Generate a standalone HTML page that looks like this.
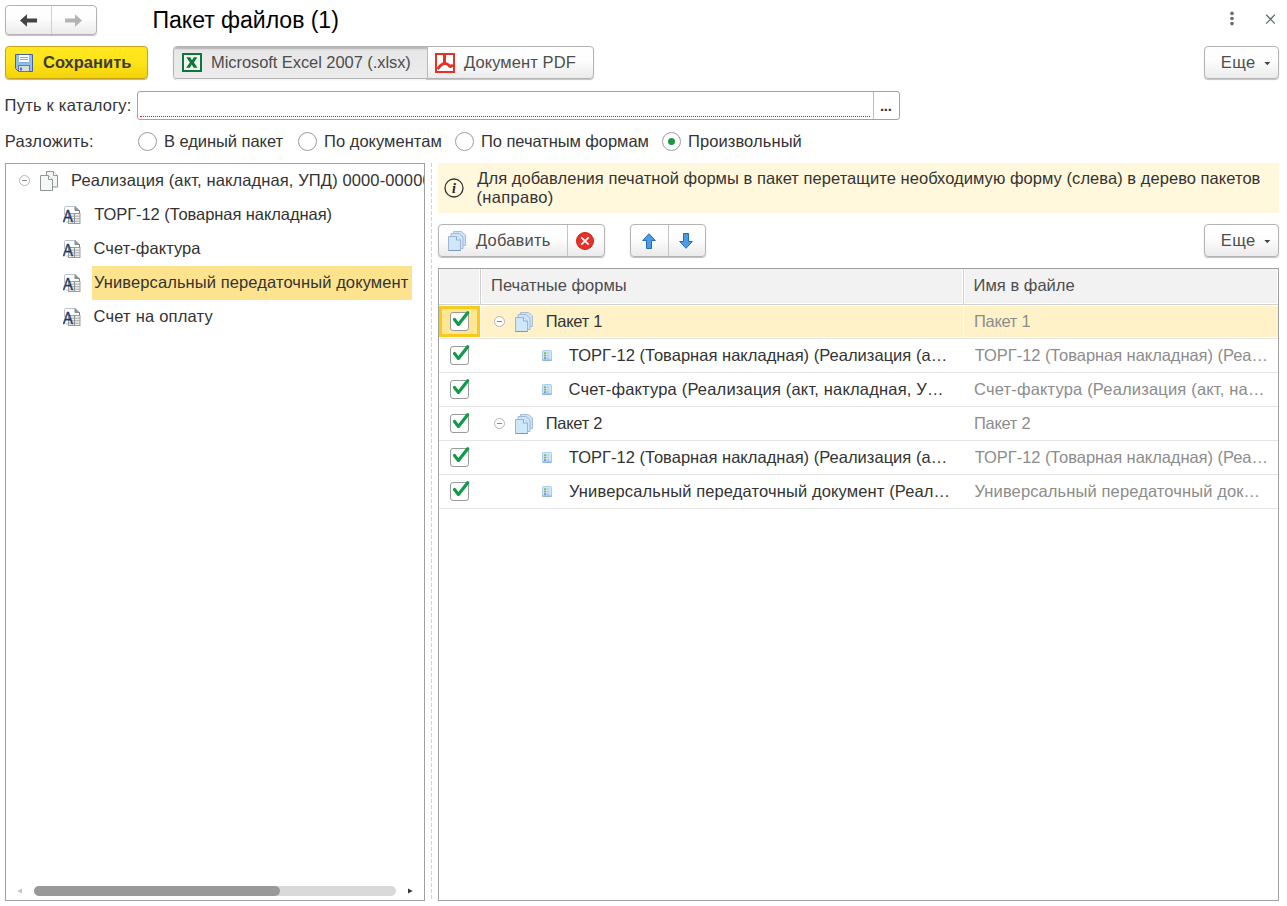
<!DOCTYPE html>
<html lang="ru">
<head>
<meta charset="utf-8">
<title>Пакет файлов (1)</title>
<style>
*{box-sizing:border-box;margin:0;padding:0}
html,body{width:1287px;height:906px;overflow:hidden;background:#fff}
body{font-family:"Liberation Sans",sans-serif;font-size:16.5px;color:#333;position:relative}
.abs{position:absolute}
.btn{position:absolute;border:1px solid #b3b3b3;border-radius:4px;background:linear-gradient(#fff 0%,#fdfdfd 45%,#ebebeb 100%);box-shadow:0 1px 1px rgba(0,0,0,.25);color:#4d4d4d;white-space:nowrap}
.txt{position:absolute;white-space:nowrap;line-height:20px}
.title{position:absolute;left:152.500px;top:6px;letter-spacing:-.05px;font-size:23.100px;line-height:28px;color:#000;white-space:nowrap}
.save{position:absolute;left:5px;top:46px;width:143px;height:33px;border:1px solid #c9a21c;border-radius:4px;background:linear-gradient(#ffe81e 0%,#fde31a 50%,#f3d30a 100%);box-shadow:0 1px 1px rgba(0,0,0,.3);color:#3b3b3b;font-weight:bold}
.radio{position:absolute;width:19px;height:19px;border:1px solid #9c9c9c;border-radius:50%;background:#fff}
.radio.on::after{content:"";position:absolute;left:5px;top:5px;width:7px;height:7px;border-radius:50%;background:#1e9447}
.panel{position:absolute;border:1px solid #a0a0a0;background:#fff}
.row{position:absolute;left:0;width:839px;height:34px}
.row .ln{position:absolute;left:0;top:33px;width:839px;height:1px;background:#e4e4e4}
.cb{position:absolute;left:11px;top:7px;width:19px;height:19px;border:1px solid #9a9a9a;border-radius:3px;background:#fff}
.cb svg{position:absolute;left:-1px;top:-4px}
.c2{position:absolute;left:535px;top:6px;line-height:20px;color:#8c8c8c;white-space:nowrap;overflow:hidden;text-overflow:ellipsis}
.c1{position:absolute;top:6px;line-height:20px;color:#333;white-space:nowrap;overflow:hidden;text-overflow:ellipsis}
</style>
</head>
<body>
<svg width="0" height="0" style="position:absolute">
<defs>
<symbol id="i-min" viewBox="0 0 11 11"><circle cx="5.500" cy="5.500" r="5" fill="#fff" stroke="#b5b5b5" stroke-width="1"/><rect x="3" y="5" width="5" height="1" fill="#8a8a8a"/></symbol>
<symbol id="i-docs" viewBox="0 0 18 20"><path d="M6.500 .5h7l4 4v11.500h-11z" fill="#f4f4f4" stroke="#8e9696" stroke-width="1"/><path d="M13.500 .5v4h4" fill="#fff" stroke="#8e9696" stroke-width="1"/><path d="M.5 4.500h8l4 4v11h-12z" fill="#f6f6f6" stroke="#8e9696" stroke-width="1"/><path d="M8.500 4.500v4h4" fill="#fff" stroke="#8e9696" stroke-width="1"/></symbol>
<symbol id="i-a" viewBox="0 0 19 19"><path d="M1.500 10V2.500Q1.500 1.500 2.500 1.500H12.500L16.500 5.500V17H3" fill="#fff" stroke="#b9c3d0" stroke-width="1"/><path d="M12 1.500V5.500H16.500V9" fill="none" stroke="#75837f" stroke-width="1"/><path d="M12 1.500L16.500 5.500H12Z" fill="#8a9895"/><rect x="5.500" y="8.500" width="11.500" height="10" fill="#efefef" stroke="#9c9c9c" stroke-width="1"/><path d="M5.500 11.200H17M5.500 13.700H17M5.500 16.200H17" stroke="#a6a6a6" stroke-width=".9" fill="none"/><path d="M11.500 8.500V18.500" stroke="#8f8f8f" stroke-width="1" fill="none"/><text x="-.2" y="17" font-family="Liberation Sans, sans-serif" font-size="16.700" fill="#1f3864" stroke="#1f3864" stroke-width=".3" textLength="10.200" lengthAdjust="spacingAndGlyphs">A</text></symbol>
<symbol id="i-pack" viewBox="0 0 18 20"><path d="M5.500 .5h8l4 3.500v10.500h-12z" fill="#cbe5f7" stroke="#a9bcd6" stroke-width="1"/><path d="M3 2.500h8l4 3.500v11.500h-12z" fill="#cde6f8" stroke="#a3b8d6" stroke-width="1"/><path d="M.5 5.500h8l4 3.500v10.500h-12z" fill="#cfe8f9" stroke="#a0b4d2" stroke-width="1"/><path d="M8.500 5.500v3.500h4" fill="#e4f2fc" stroke="#8eaad2" stroke-width="1"/><path d="M.5 19.500h12" stroke="#7f96c4" stroke-width="1"/></symbol>
<symbol id="i-sheet" viewBox="0 0 10 11"><rect x=".5" y=".5" width="9" height="10" rx=".8" fill="#d0e8f8" stroke="#a9cdee" stroke-width="1"/><rect x=".3" y="9.500" width="9.400" height="1.200" fill="#88a8d6"/><rect x="2" y="2.200" width="2.200" height="2" fill="#6ec468"/><rect x="2" y="4.900" width="2.200" height="1.500" fill="#e0863e"/><rect x="2" y="7.200" width="2.200" height="1.800" fill="#58a2e4"/><rect x="5.200" y="2.200" width="2" height="2" fill="#b6d4f0"/><rect x="5.200" y="5.200" width="2" height="1" fill="#a9c6e6"/><rect x="5.200" y="7.200" width="2" height="1.800" fill="#a9c6e6"/></symbol>
<symbol id="i-chk" viewBox="0 0 22 24"><path d="M4.500 10.500 L8.400 15.400 L17.700 3.700" fill="none" stroke="#0f9b4a" stroke-width="3.200" stroke-linejoin="round" stroke-linecap="round"/></symbol>
</defs>
</svg>
<!-- nav buttons -->
<div class="btn" style="left:5px;top:5px;width:92px;height:30px"></div>
<div class="abs" style="left:51px;top:6px;width:1px;height:28px;background:#d0d0d0"></div>
<svg class="abs" style="left:19px;top:13px" width="20" height="15" viewBox="0 0 20 15"><path d="M1 7.500 L8 1.300 L8 5.500 L18 5.500 L18 9.500 L8 9.500 L8 13.700 Z" fill="#444"/></svg>
<svg class="abs" style="left:63px;top:13px" width="20" height="15" viewBox="0 0 20 15"><path d="M19 7.500 L12 1.300 L12 5.500 L2 5.500 L2 9.500 L12 9.500 L12 13.700 Z" fill="#b3b3b3"/></svg>
<svg class="abs" style="left:1229px;top:11px" width="6" height="15" viewBox="0 0 6 15"><circle cx="3" cy="2.400" r="1.800" fill="#666d6b"/><circle cx="3" cy="7.500" r="1.800" fill="#666d6b"/><circle cx="3" cy="12.600" r="1.800" fill="#666d6b"/></svg>
<svg class="abs" style="left:1265px;top:14px" width="11" height="11" viewBox="0 0 11 11"><path d="M1.200 .8L9.800 9.600M9.800 .8L1.200 9.600" stroke="#5f6e6b" stroke-width="1.300" fill="none"/></svg>
<div class="title">Пакет файлов (1)</div>
<!-- save -->
<div class="save"><svg class="abs" style="left:9px;top:7px" width="18" height="18" viewBox="0 0 18 18"><path d="M.5 .5H17.500V17.500H3.500L.5 14.500Z" fill="#8ec1e9" stroke="#3f63a3" stroke-width="1"/><rect x="4" y="1" width="10" height="7" fill="#fff"/><rect x="4" y="8" width="10" height=".6" fill="#7a96c4"/><rect x="5" y="3" width="8" height="1" fill="#7fb0dc"/><rect x="5" y="5" width="8" height="1" fill="#7fb0dc"/><rect x="3.500" y="11.500" width="11" height="6" fill="#dcdcdc" stroke="#6d6fae" stroke-width="1"/><rect x="5" y="13.500" width="2" height="3" fill="#2e7fd6"/></svg><span class="txt" style="left:37px;top:5px">Сохранить</span></div>
<!-- format toggle -->
<div class="btn" style="left:173px;top:46px;width:421px;height:33px"></div>
<div class="abs" style="left:174px;top:47px;width:254px;height:31px;background:linear-gradient(#b6b6b6 0,#bdbdbd 1.500px,#dcdcdc 2.500px,#e7e7e7 4px,#ececec 100%);border-radius:3px 0 0 3px;border-right:1px solid #b9b9b9"></div>
<div class="abs" style="left:176px;top:79px;width:250px;height:1px;background:#f6f6f6"></div>
<svg class="abs" style="left:182px;top:53px" width="20" height="19" viewBox="0 0 20 19"><rect x="1" y="1" width="18" height="17" fill="#f3f1f1" stroke="#0a7837" stroke-width="2"/><path d="M4.300 4.300H8.200L10 7.300L11.800 4.300H15.300L11.900 9.400L15.500 14.800H11.700L9.800 11.600L7.900 14.800H4.100L7.900 9.400Z" fill="#0a7837"/></svg>
<svg class="abs" style="left:435px;top:53px" width="20" height="20" viewBox="0 0 20 20"><rect x="1" y="1" width="18" height="18" fill="#fff" stroke="#e3342a" stroke-width="2"/><path d="M9.500 2V9.500" stroke="#e3342a" stroke-width="3" fill="none"/><path d="M2.500 16L5.500 12.500L9.500 10L13 11.500L15 13.500L18 12.500" stroke="#e3342a" stroke-width="2.900" fill="none" stroke-linejoin="round"/></svg>
<span class="txt" style="left:211px;top:52px;color:#4d4d4d;letter-spacing:-.07px">Microsoft Excel 2007 (.xlsx)</span>
<span class="txt" style="left:464px;top:52px;color:#4d4d4d;letter-spacing:.091px">Документ PDF</span>
<div class="btn" style="left:1204px;top:46px;width:75px;height:33px"><span class="txt" style="left:15.800px;top:5px;letter-spacing:.35px">Еще</span><svg class="abs" style="left:59px;top:15px" width="7" height="4"><path d="M.3 0h6L3.300 3.200z" fill="#444"/></svg></div>
<!-- path -->
<span class="txt" style="left:4.600px;top:95px;letter-spacing:.227px">Путь к каталогу:</span>
<div class="abs" style="left:137px;top:91px;width:763px;height:29px;border:1px solid #a2a2a2;border-radius:3px;background:#fff"></div>
<div class="abs" style="left:873px;top:92px;width:1px;height:27px;background:#bdbdbd"></div>
<div class="abs" style="left:140px;top:116px;width:730px;height:0;border-top:1px dotted #f01010"></div>
<span class="txt" style="left:880px;top:96px;color:#333;font-weight:bold;font-size:15px;letter-spacing:-.3px">...</span>
<!-- radios -->
<span class="txt" style="left:4.800px;top:131px;letter-spacing:.244px">Разложить:</span>
<div class="radio" style="left:138px;top:132px"></div><span class="txt" style="left:164px;top:131px;letter-spacing:-.054px">В единый пакет</span>
<div class="radio" style="left:298px;top:132px"></div><span class="txt" style="left:324px;top:131px;letter-spacing:.033px">По документам</span>
<div class="radio" style="left:455px;top:132px"></div><span class="txt" style="left:481px;top:131px;letter-spacing:-.059px">По печатным формам</span>
<div class="radio on" style="left:662px;top:132px"></div><span class="txt" style="left:688px;top:131px;letter-spacing:.091px">Произвольный</span>
<!-- left tree -->
<div class="panel" style="left:5px;top:163px;width:420px;height:738px;overflow:hidden">
<svg class="abs" style="left:13px;top:11px" width="11" height="11"><use href="#i-min"/></svg>
<svg class="abs" style="left:34px;top:7px" width="18" height="20"><use href="#i-docs"/></svg>
<span class="txt" style="left:65px;top:6px;letter-spacing:.12px">Реализация (акт, накладная, УПД) 0000-000001 от 01.01.2020</span>
<svg class="abs" style="left:57px;top:41px" width="19" height="19"><use href="#i-a"/></svg>
<span class="txt" style="left:88.200px;top:40px;letter-spacing:-.063px">ТОРГ-12 (Товарная накладная)</span>
<svg class="abs" style="left:57px;top:75px" width="19" height="19"><use href="#i-a"/></svg>
<span class="txt" style="left:87.500px;top:74px;letter-spacing:.064px">Счет-фактура</span>
<div class="abs" style="left:86px;top:102px;width:320px;height:34px;background:#fde38e"></div>
<svg class="abs" style="left:57px;top:109px" width="19" height="19"><use href="#i-a"/></svg>
<span class="txt" style="left:88px;top:108px;letter-spacing:.097px">Универсальный передаточный документ</span>
<svg class="abs" style="left:57px;top:143px" width="19" height="19"><use href="#i-a"/></svg>
<span class="txt" style="left:87.500px;top:142px;letter-spacing:.215px">Счет на оплату</span>
<div class="abs" style="left:28px;top:722px;width:362px;height:10px;border-radius:5px;background:#d9d9d9"></div>
<div class="abs" style="left:28px;top:722px;width:246px;height:10px;border-radius:5px;background:#999"></div>
<svg class="abs" style="left:11px;top:724px" width="5" height="6" viewBox="0 0 5 6"><path d="M5 .5L.3 3L5 5.500z" fill="#c2c2c2"/></svg>
<svg class="abs" style="left:402px;top:724px" width="5" height="6" viewBox="0 0 5 6"><path d="M0 .5L4.700 3L0 5.500z" fill="#3a3a3a"/></svg>
</div>
<!-- right -->
<div class="abs" style="left:438px;top:163px;width:841px;height:50px;background:#fff8dc"></div>
<svg class="abs" style="left:444px;top:178px" width="20" height="20" viewBox="0 0 20 20"><circle cx="10" cy="10" r="9" fill="none" stroke="#333" stroke-width="1.300"/><text x="10" y="15" text-anchor="middle" font-family="Liberation Serif, serif" font-style="italic" font-weight="bold" font-size="14" fill="#222">i</text></svg>
<div class="txt" style="left:477.300px;top:169px;line-height:19px;color:#333;letter-spacing:.05px">Для добавления печатной формы в пакет перетащите необходимую форму (слева) в дерево пакетов</div>
<div class="txt" style="left:476.500px;top:188px;line-height:19px;color:#333;letter-spacing:.312px">(направо)</div>
<div class="abs" style="left:431px;top:163px;width:1px;height:738px;background:repeating-linear-gradient(to bottom,#d2d2d2 0,#d2d2d2 4px,transparent 4px,transparent 6px)"></div>
<div class="btn" style="left:438px;top:224px;width:167px;height:33px"><svg class="abs" style="left:9px;top:6px" width="18" height="20"><use href="#i-pack"/></svg><span class="txt" style="left:37px;top:5px;letter-spacing:.2px">Добавить</span></div>
<div class="abs" style="left:567px;top:225px;width:1px;height:31px;background:#c4c4c4"></div>
<svg class="abs" style="left:576px;top:232px" width="18" height="18" viewBox="0 0 18 18"><circle cx="9" cy="9" r="8.500" fill="#e8302a" stroke="#c72620" stroke-width="1"/><path d="M5.300 5.300L12.700 12.700M12.700 5.300L5.300 12.700" stroke="#fff" stroke-width="1.700" fill="none"/></svg>
<div class="btn" style="left:630px;top:224px;width:76px;height:33px"></div>
<div class="abs" style="left:668px;top:225px;width:1px;height:31px;background:#c4c4c4"></div>
<svg class="abs" style="left:642px;top:233px" width="14" height="16" viewBox="0 0 14 16"><path d="M7 .7L13.300 7.500H9.500V15.500H4.500V7.500H.7Z" fill="#4c9be6" stroke="#2a68b4" stroke-width="1"/></svg>
<svg class="abs" style="left:679px;top:233px" width="14" height="16" viewBox="0 0 14 16"><path d="M7 15.300L13.300 8.500H9.500V.5H4.500V8.500H.7Z" fill="#4c9be6" stroke="#2a68b4" stroke-width="1"/></svg>
<div class="btn" style="left:1204px;top:224px;width:75px;height:33px"><span class="txt" style="left:15.800px;top:5px;letter-spacing:.35px">Еще</span><svg class="abs" style="left:59px;top:15px" width="7" height="4"><path d="M.3 0h6L3.300 3.200z" fill="#444"/></svg></div>
<div class="panel" style="left:438px;top:268px;width:841px;height:633px;overflow:hidden">
<div class="abs" style="left:1px;top:0;width:39px;height:34px;background:#f2f2f2"></div>
<div class="abs" style="left:43px;top:0;width:480px;height:34px;background:#f2f2f2"></div>
<div class="abs" style="left:526px;top:0;width:312px;height:34px;background:#f2f2f2"></div>
<div class="abs" style="left:0;top:35px;width:839px;height:1px;background:#d2d2d2"></div>
<div class="abs" style="left:41px;top:0;width:1px;height:36px;background:#cfcfcf"></div>
<div class="abs" style="left:524px;top:0;width:1px;height:36px;background:#cfcfcf"></div>
<span class="txt" style="left:52px;top:6px;color:#4d4d4d;letter-spacing:.031px">Печатные формы</span>
<span class="txt" style="left:534.600px;top:6px;color:#4d4d4d;letter-spacing:.02px">Имя в файле</span>
<div class="row" style="top:36px"><div class="abs" style="left:0;top:1px;width:839px;height:31px;background:#fff2c8"></div><div class="abs" style="left:0;top:1px;width:41px;height:31px;background:#fde792;border:3px solid #f7ca1c"></div><div class="abs" style="left:41px;top:1px;width:1px;height:31px;background:#fffaf0"></div><div class="abs" style="left:524px;top:1px;width:1px;height:31px;background:#fffaf0"></div><div class="cb"><svg width="22" height="24"><use href="#i-chk"/></svg></div><svg class="abs" style="left:55px;top:11px" width="11" height="11"><use href="#i-min"/></svg><svg class="abs" style="left:76px;top:7px" width="18" height="20"><use href="#i-pack"/></svg><span class="c1" style="left:106.8px;letter-spacing:-0.3px">Пакет 1</span><span class="c2" style="left:535px;letter-spacing:-0.3px">Пакет 1</span><div class="ln"></div></div>
<div class="row" style="top:70px"><div class="cb"><svg width="22" height="24"><use href="#i-chk"/></svg></div><svg class="abs" style="left:103px;top:11px" width="10" height="11"><use href="#i-sheet"/></svg><span class="c1" style="left:129.8px;letter-spacing:0.026px">ТОРГ-12 (Товарная накладная) (Реализация (а…</span><span class="c2" style="left:535.8px;letter-spacing:-0.052px">ТОРГ-12 (Товарная накладная) (Реа…</span><div class="ln"></div></div>
<div class="row" style="top:104px"><div class="cb"><svg width="22" height="24"><use href="#i-chk"/></svg></div><svg class="abs" style="left:103px;top:11px" width="10" height="11"><use href="#i-sheet"/></svg><span class="c1" style="left:129.5px;letter-spacing:0.179px">Счет-фактура (Реализация (акт, накладная, У…</span><span class="c2" style="left:535px;letter-spacing:0.176px">Счет-фактура (Реализация (акт, на…</span><div class="ln"></div></div>
<div class="row" style="top:138px"><div class="cb"><svg width="22" height="24"><use href="#i-chk"/></svg></div><svg class="abs" style="left:55px;top:11px" width="11" height="11"><use href="#i-min"/></svg><svg class="abs" style="left:76px;top:7px" width="18" height="20"><use href="#i-pack"/></svg><span class="c1" style="left:106.8px;letter-spacing:-0.3px">Пакет 2</span><span class="c2" style="left:535px;letter-spacing:-0.3px">Пакет 2</span><div class="ln"></div></div>
<div class="row" style="top:172px"><div class="cb"><svg width="22" height="24"><use href="#i-chk"/></svg></div><svg class="abs" style="left:103px;top:11px" width="10" height="11"><use href="#i-sheet"/></svg><span class="c1" style="left:129.8px;letter-spacing:0.026px">ТОРГ-12 (Товарная накладная) (Реализация (а…</span><span class="c2" style="left:535.8px;letter-spacing:-0.052px">ТОРГ-12 (Товарная накладная) (Реа…</span><div class="ln"></div></div>
<div class="row" style="top:206px"><div class="cb"><svg width="22" height="24"><use href="#i-chk"/></svg></div><svg class="abs" style="left:103px;top:11px" width="10" height="11"><use href="#i-sheet"/></svg><span class="c1" style="left:130px;letter-spacing:0.127px">Универсальный передаточный документ (Реал…</span><span class="c2" style="left:535.5px;letter-spacing:0.117px">Универсальный передаточный док…</span><div class="ln"></div></div>
</div>
</body>
</html>
